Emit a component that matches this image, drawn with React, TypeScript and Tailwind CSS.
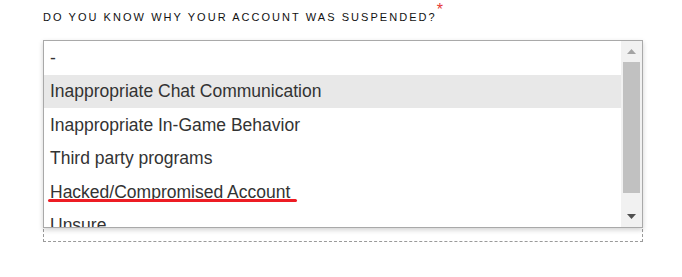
import React from 'react';

const options = [
  '-',
  'Inappropriate Chat Communication',
  'Inappropriate In-Game Behavior',
  'Third party programs',
  'Hacked/Compromised Account',
  'Unsure',
];

const App: React.FC = () => {
  const highlighted = 1;

  return (
    <div className="relative w-[682px] h-[277px] bg-white overflow-hidden font-['Liberation_Sans',Arial,sans-serif]">
      <div className="pl-[43px] pt-[11px]">
        <div className="h-[13px] text-[11px] leading-[13px] tracking-[2.05px] uppercase text-[#111] whitespace-nowrap">
          Do you know why your account was suspended?
          <span className="relative -top-[6px] text-[16px] leading-[0] text-[#e53935] tracking-normal">*</span>
        </div>

        <div className="relative mt-[16px] w-[600px] h-[202px] border border-dashed border-[#9a9a9a]">
          <div className="absolute -left-px -top-px w-[600px] h-[188px] border border-[#a9a9a9] bg-white shadow-[0_2px_5px_rgba(0,0,0,0.18)] flex">
            <ul className="flex-1 overflow-hidden">
              {options.map((opt, i) => (
                <li
                  key={opt}
                  className={`h-[33.5px] flex items-center pl-[6px] text-[17.5px] text-[#333] whitespace-nowrap ${
                    i === highlighted ? 'bg-[#e8e8e8]' : ''
                  }`}
                >
                  {opt}
                </li>
              ))}
            </ul>
            <div className="w-[21px] bg-[#f1f1f1] flex flex-col">
              <div className="h-[21px] flex items-center justify-center">
                <svg width="9" height="5" viewBox="0 0 9 5">
                  <path d="M4.5 0 L9 5 L0 5 Z" fill="#a3a3a3" />
                </svg>
              </div>
              <div className="flex-1 pl-[2px]">
                <div className="w-[17px] h-[131px] bg-[#c1c1c1]" />
              </div>
              <div className="h-[21px] flex items-center justify-center">
                <svg width="9" height="5" viewBox="0 0 9 5">
                  <path d="M0 0 L9 0 L4.5 5 Z" fill="#505050" />
                </svg>
              </div>
            </div>
          </div>
        </div>
      </div>

      {/* annotation stroke */}
      <div className="absolute left-[48px] top-[199px] w-[249px] h-[3px] rounded-full bg-[#ed1c24]" />
    </div>
  );
};

export default App;
